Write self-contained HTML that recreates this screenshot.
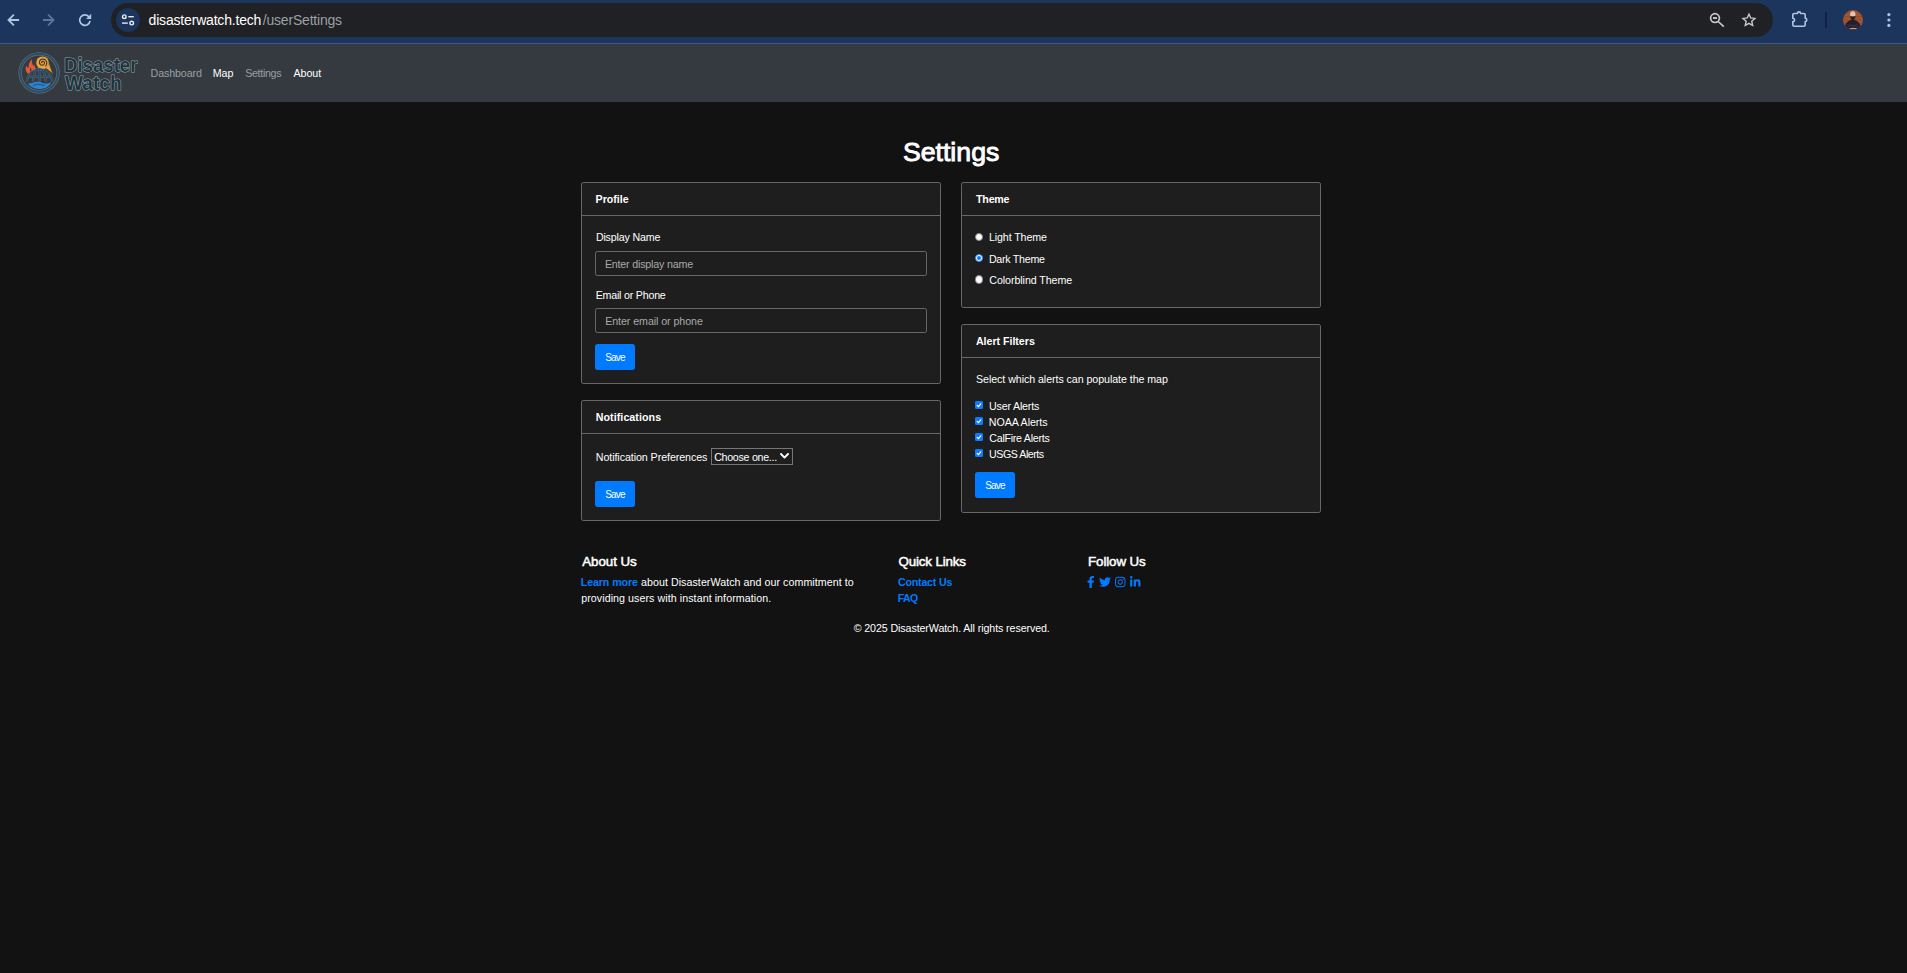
<!DOCTYPE html>
<html lang="en">
<head>
<meta charset="utf-8">
<title>DisasterWatch - Settings</title>
<style>
*{box-sizing:border-box;margin:0;padding:0}
html,body{width:1907px;height:973px;overflow:hidden;background:#121212}
body{position:relative;font-family:"Liberation Sans",sans-serif;font-size:10.667px;line-height:16px;color:#fff}
.x{position:absolute;white-space:nowrap;line-height:16px;font-weight:400;font-size:10.667px}
/* ---------- browser chrome ---------- */
#chrome{position:absolute;left:0;top:0;width:1907px;height:44px;background:#1b355c;border-bottom:1px solid #3d5884}
#chrome svg{position:absolute;overflow:visible}
#omni{position:absolute;left:111px;top:3px;width:1662px;height:34px;border-radius:17px;background:#202124}
#siteinfo{position:absolute;left:5px;top:5px;width:24px;height:24px;border-radius:12px;background:#1b355c}
#url{position:absolute;left:0;top:0;height:34px;color:#fff}
#u1,#u2{font-size:14px;line-height:20px}
#u2{color:#9aa0a6}
#sep{position:absolute;left:1825px;top:12px;width:2px;height:16px;background:#0f2244;border-radius:1px}
#avatar{position:absolute;left:1843px;top:10px;width:20px;height:20px;border-radius:50%;overflow:hidden;background:#7a4a3a}
/* ---------- navbar ---------- */
#nav{position:absolute;left:0;top:44px;width:1907px;height:58px;background:#343a40}
#nav a{text-decoration:none;color:#fff}
#nav a.dim{color:rgba(255,255,255,.5)}
#wm span{position:absolute;left:64.3px;font-size:20.1px;font-weight:700;line-height:24px;white-space:nowrap;color:#1c3640;transform-origin:0 0;transform:scaleX(.926);-webkit-text-stroke:1px rgba(165,178,185,.85);paint-order:stroke fill;text-shadow:0 0 .8px rgba(165,178,185,.7)}
#logo{position:absolute;overflow:visible}
/* ---------- main ---------- */
h1.x{font-size:26.667px;line-height:32px;-webkit-text-stroke:.9px #fff}
.card{position:absolute;width:360px;background:#1e1e1e;border:1px solid #676767;border-radius:2.2px}
.card .hd{position:relative;height:33px;border-bottom:1px solid #676767}
.card .hd .x{font-weight:700}
.card .bd{position:relative}
.inp{position:absolute;left:13.333px;width:332px;height:25.333px;border:1px solid #676767;border-radius:2.2px;background:#1e1e1e;color:#a9a9a9}
.btn{position:absolute;left:13.333px;width:40px;height:26px;border-radius:2.667px;background:#007bff;color:#fff}
.radio{position:absolute;left:13.16px;width:8.2px;height:8.2px;border-radius:50%;background:#fff;border:.8px solid #8a8a8a}
.radio.on{border:.9px solid #2f83ff;background:#fff}
.radio.on::after{content:"";position:absolute;left:1px;top:1px;right:1px;bottom:1px;border-radius:50%;background:#0b7bff}
.chk{position:absolute;left:13.1px;width:8px;height:8px;border-radius:1.3px;background:#0b7bff}
.chk svg{position:absolute;left:0;top:0;width:100%;height:100%}
.sel{position:absolute;left:129px;top:13.67px;width:82px;height:17px;border:1px solid #767676;background:#1e1e1e}
.sel svg{position:absolute;right:3.4px;top:4.1px;width:9px;height:6px}
/* ---------- footer ---------- */
h5.x{font-size:13.333px;-webkit-text-stroke:.5px #fff}
a.lk{color:#007bff;font-weight:700;text-decoration:none}
#social svg{position:absolute;overflow:visible}
#b1,#b2,#b3{font-size:10px}
#f7{font-size:10.5px}
/*FIT*/
#u1{left:37.60px;top:7.00px;letter-spacing:-0.185px}
#u2{left:151.80px;top:7.00px;letter-spacing:-0.201px}
#n1{left:150.55px;top:21.00px;letter-spacing:-0.104px}
#n2{left:212.85px;top:21.00px;letter-spacing:-0.100px}
#n3{left:245.20px;top:21.00px;letter-spacing:-0.306px}
#n4{left:293.50px;top:21.00px;letter-spacing:-0.046px}
#h1{left:902.90px;top:136.00px;letter-spacing:0.014px}
#c1h{left:13.60px;top:8.00px;letter-spacing:-0.033px}
#l1{left:13.90px;top:13.00px;letter-spacing:-0.172px}
#p1{left:8.55px;top:4.34px;letter-spacing:-0.174px}
#l2{left:13.70px;top:71.00px;letter-spacing:-0.213px}
#p2{left:8.85px;top:4.00px;letter-spacing:-0.064px}
#b1{left:9.90px;top:6.00px;letter-spacing:-0.795px}
#c2h{left:13.75px;top:7.70px;letter-spacing:0.067px}
#l3{left:13.75px;top:14.70px;letter-spacing:-0.063px}
#s1{left:2.15px;top:0.05px;letter-spacing:-0.275px}
#b2{left:9.90px;top:6.31px;letter-spacing:-0.795px}
#c3h{left:14.10px;top:8.00px;letter-spacing:-0.238px}
#r1{left:26.90px;top:13.00px;letter-spacing:-0.095px}
#r2{left:26.90px;top:35.00px;letter-spacing:-0.260px}
#r3{left:27.30px;top:56.00px;letter-spacing:-0.067px}
#c4h{left:13.90px;top:8.34px;letter-spacing:-0.024px}
#pp{left:14.00px;top:13.34px;letter-spacing:-0.061px}
#k1{left:27.10px;top:40.34px;letter-spacing:-0.190px}
#k2{left:26.85px;top:56.34px;letter-spacing:-0.050px}
#k3{left:27.35px;top:72.34px;letter-spacing:-0.275px}
#k4{left:27.10px;top:88.34px;letter-spacing:-0.480px}
#b3{left:9.90px;top:5.96px;letter-spacing:-0.795px}
#f1{left:582.25px;top:554.00px;letter-spacing:-0.055px}
#f2{left:580.75px;top:574.00px;letter-spacing:-0.098px}
#f3{left:641.00px;top:574.00px;letter-spacing:0.054px}
#f4{left:581.25px;top:590.00px;letter-spacing:0.067px}
#f5{left:898.40px;top:554.00px;letter-spacing:-0.130px}
#f6{left:897.90px;top:574.00px;letter-spacing:-0.191px}
#f7{left:897.65px;top:590.00px;letter-spacing:-0.500px}
#f8{left:1088.05px;top:554.00px;letter-spacing:-0.104px}
#f9{left:853.65px;top:620.00px;letter-spacing:-0.092px}
/*ENDFIT*/
</style>
</head>
<body>

<!-- ================= browser chrome ================= -->
<div id="chrome">
  <div id="omni">
    <div id="siteinfo"></div>
    <div id="url"><span class="x" id="u1">disasterwatch.tech</span><span class="x" id="u2">/userSettings</span></div>
  </div>
  <svg id="cicons" width="1907" height="44" viewBox="0 0 1907 44" style="left:0;top:0">
    <!-- back -->
    <path d="M19.1 20H8.2M13.9 14.6L8.5 20l5.4 5.4" fill="none" stroke="#b2c4e3" stroke-width="1.8"/>
    <!-- forward -->
    <path d="M43 20h10.7M48.1 14.6l5.4 5.4-5.4 5.4" fill="none" stroke="#5d749c" stroke-width="1.8"/>
    <!-- reload -->
    <path d="M89.2 17.2A5.2 5.2 0 1 0 90.050 20.900" fill="none" stroke="#b2c4e3" stroke-width="1.65"/>
    <path d="M91.2 13.8v5.2h-5.2z" fill="#b2c4e3"/>
    <!-- tune / site info -->
    <g fill="none" stroke="#e8eaed" stroke-width="1.4">
      <circle cx="124.3" cy="16.7" r="1.8"/><path d="M128.3 16.7h5.500"/>
      <path d="M122 23.1h5.800"/><circle cx="131.700" cy="23.100" r="1.800"/>
    </g>
    <!-- zoom out -->
    <g fill="none" stroke="#c7c9cc" stroke-width="1.7">
      <circle cx="1715" cy="18.1" r="4.4"/><path d="M1718.2 21.5l5.6 5.2"/>
    </g>
    <rect x="1713" y="17.1" width="4" height="1.9" fill="#c7c9cc"/>
    <!-- star -->
    <polygon points="1748.95,14.10 1750.68,17.96 1754.89,18.42 1751.76,21.26 1752.62,25.41 1748.95,23.30 1745.28,25.41 1746.14,21.26 1743.01,18.42 1747.22,17.96" fill="none" stroke="#c7c9cc" stroke-width="1.4" stroke-linejoin="miter"/>
    <!-- extension -->
    <path d="M1794.3 13.5H1797.4A1.6 1.6 0 0 1 1800.6 13.5H1803.7A1.5 1.5 0 0 1 1805.2 15V18.3A1.6 1.6 0 0 1 1805.2 21.5V24.7A1.5 1.5 0 0 1 1803.7 26.2H1794.3A1.5 1.5 0 0 1 1792.8 24.7V21.6A1.7 1.7 0 0 0 1792.8 18.2V15A1.5 1.5 0 0 1 1794.3 13.5Z" fill="none" stroke="#b2c4e3" stroke-width="1.6" stroke-linejoin="round"/>
    <!-- menu dots -->
    <g fill="#b2c4e3"><circle cx="1888.9" cy="14.6" r="1.6"/><circle cx="1888.9" cy="20" r="1.6"/><circle cx="1888.9" cy="25.4" r="1.6"/></g>
  </svg>
  <div id="sep"></div>
  <div id="avatar"><svg width="20" height="20" viewBox="1842.9 10 20 20" style="left:0;top:0">
      <defs><clipPath id="avc"><circle cx="1852.9" cy="20" r="10"/></clipPath></defs>
      <g clip-path="url(#avc)">
        <rect x="1842" y="9" width="22" height="22" fill="#9f5631"/>
        <path d="M1842 13h22M1842 16.5h22M1842 20h22M1842 23.500h22" stroke="#87452a" stroke-width=".5"/>
        <path d="M1844.2 31C1844.2 24.5 1846.6 20.6 1852.7 19.4C1858.800 20.6 1861.2 24.5 1861.2 31Z" fill="#241f2e"/>
        <path d="M1847 24.5L1859 27M1846.500 27L1858 24.500" stroke="#4a4052" stroke-width=".5"/>
        <ellipse cx="1852.7" cy="14.4" rx="2.7" ry="3.2" fill="#e3c3b2"/>
        <path d="M1850 15.6C1850.300 19.600 1851.600 20 1852.700 20C1853.800 20 1855.100 19.600 1855.400 15.600C1854.400 16.800 1851 16.800 1850 15.600Z" fill="#2a1e1b"/>
        <path d="M1849.400 28.300Q1853 27.300 1856.800 28.300L1856.500 29.500Q1853 28.600 1849.700 29.500Z" fill="#c99a82"/>
      </g>
    </svg></div>
</div>

<!-- ================= navbar ================= -->
<div id="nav">
  <div id="wm"><span style="top:8.7px">Disaster</span><span style="top:27.2px;left:64.500px;transform:scaleX(.95)">Watch</span></div>
  <svg id="logo" width="150" height="58" viewBox="0 44 150 58" style="left:0;top:0;width:150px;height:58px">
    <!-- ring -->
    <circle cx="39.1" cy="72.8" r="19" fill="none" stroke="#8c9aa3" stroke-opacity=".55" stroke-width="3.3"/>
    <circle cx="39.1" cy="72.8" r="19" fill="none" stroke="#274d68" stroke-width="2"/>
    <!-- flame -->
    <path d="M28.3 73.9C25.4 71.6 24.8 68.4 26.5 65.5C26.9 67 27.5 67.8 28.5 68.2C28.2 64.6 29.6 61.4 31.8 59C31.4 61.8 32.4 63.8 33.3 65.9C33.6 65.5 33.9 65.2 34.1 64.8C35.4 66.8 35.8 68.8 35.2 70.6C33 71 30.4 72.2 28.3 73.9Z" fill="#e05a34"/>
    <path d="M30.6 67.4C31.7 69 31.7 70.6 30.9 72C29.7 71.4 29.5 69.2 30.6 67.4Z" fill="#343a40"/>
    <!-- swirl -->
    <path d="M48.9 62.5C49.6 66 50.8 69.5 52.9 73.9C50.6 71.4 48.6 69.700 45.8 68.300L48.2 65.500Z" fill="#f0a236"/>
    <circle cx="42.5" cy="62.7" r="6.300" fill="#f0a236"/>
    <path d="M41.71 62.56L41.69 62.45L41.69 62.33L41.70 62.21L41.73 62.08L41.78 61.96L41.85 61.84L41.94 61.72L42.05 61.62L42.18 61.53L42.32 61.45L42.48 61.39L42.65 61.35L42.83 61.34L43.01 61.35L43.20 61.38L43.39 61.44L43.57 61.53L43.74 61.64L43.90 61.78L44.05 61.94L44.18 62.13L44.28 62.33L44.36 62.56L44.41 62.79L44.43 63.04L44.41 63.29L44.37 63.55L44.28 63.80L44.17 64.04L44.02 64.27L43.84 64.49L43.63 64.68L43.39 64.85L43.12 64.99L42.84 65.10L42.53 65.16L42.22 65.20L41.90 65.19L41.58 65.13L41.26 65.04L40.95 64.90L40.65 64.73L40.38 64.51L40.13 64.25L39.91 63.96L39.73 63.64L39.59 63.30L39.49 62.93L39.44 62.55L39.43 62.16L39.48 61.77L39.58 61.38L39.73 61.00L39.93 60.63L40.18 60.29L40.47 59.99L40.80 59.71L41.17 59.48L41.57 59.29L42.00 59.16L42.45 59.08L42.91 59.06L43.37 59.09L43.84 59.19L44.29 59.34L44.72 59.55L45.13 59.82L45.50 60.14L45.84 60.51L46.13 60.93L46.37 61.38L46.55 61.87L46.66 62.38L46.72 62.91L46.70 63.44L46.62 63.98L46.47 64.50L46.25 65.01L45.97 65.49L45.63 65.94" fill="none" stroke="#3d3a3a" stroke-width="1.150" stroke-linecap="round"/>
    <!-- globe -->
    <g fill="none" stroke="#8c9aa3" stroke-opacity=".4" stroke-width="2.3">
      <path d="M27 81.6A12.5 12.5 0 0 1 52 81.6"/><path d="M39.5 68.9V81.6"/><path d="M33.2 81.6A6.3 12.5 0 0 1 45.8 81.6"/><path d="M27.9 76.8H51.1"/>
    </g>
    <g fill="none" stroke="#274d68" stroke-width="1.25">
      <path d="M27 81.6A12.5 12.5 0 0 1 52 81.6"/>
      <path d="M39.5 68.9V81.6"/>
      <path d="M33.2 81.6A6.3 12.5 0 0 1 45.8 81.6"/>
      <path d="M27.9 76.8H51.1"/>
      <path d="M30.6 72.6Q39.5 70.6 48.4 72.6"/>
    </g>
    <!-- water -->
    <path d="M28 83.6C31 83.6 34.5 81.6 38 81.7C41.5 81.8 42.5 83.6 45.5 83.6C48 83.6 49.5 82.6 51.2 82.2C49.6 86.2 45 89 39.2 89C34 89 29.6 86.6 28 83.6Z" fill="#2a84d6"/>
    <path d="M32.8 86C35.5 84.3 38 84 40 84.5C42 85 43 85.6 44.8 85.3" fill="none" stroke="#343a40" stroke-width=".8"/>
  </svg>
  <a class="dim x" id="n1" href="#">Dashboard</a>
  <a class="x" id="n2" href="#">Map</a>
  <a class="dim x" id="n3" href="#">Settings</a>
  <a class="x" id="n4" href="#">About</a>
</div>

<!-- ================= main ================= -->
<h1 class="x" id="h1">Settings</h1>

<div class="card" style="left:581px;top:182px;height:201.5px">
  <div class="hd"><span class="x" id="c1h">Profile</span></div>
  <div class="bd">
    <label class="x" id="l1">Display Name</label>
    <div class="inp" style="top:34.667px"><span class="x" id="p1">Enter display name</span></div>
    <label class="x" id="l2">Email or Phone</label>
    <div class="inp" style="top:92px"><span class="x" id="p2">Enter email or phone</span></div>
    <div class="btn" style="top:128px"><span class="x" id="b1">Save</span></div>
  </div>
</div>

<div class="card" style="left:581px;top:400.3px;height:120.3px">
  <div class="hd"><span class="x" id="c2h">Notifications</span></div>
  <div class="bd">
    <label class="x" id="l3">Notification Preferences</label>
    <div class="sel"><span class="x" id="s1">Choose one...</span><svg viewBox="0 0 9 6"><path d="M1 1 L4.5 4.6 L8 1" fill="none" stroke="#fff" stroke-width="1.9" stroke-linecap="round" stroke-linejoin="round"/></svg></div>
    <div class="btn" style="top:46.4px"><span class="x" id="b2">Save</span></div>
  </div>
</div>

<div class="card" style="left:961px;top:182px;height:125.7px">
  <div class="hd"><span class="x" id="c3h">Theme</span></div>
  <div class="bd">
    <div class="radio" style="top:16.85px"></div><label class="x" id="r1">Light Theme</label>
    <div class="radio on" style="top:37.8px"></div><label class="x" id="r2">Dark Theme</label>
    <div class="radio" style="top:59.4px"></div><label class="x" id="r3">Colorblind Theme</label>
  </div>
</div>

<div class="card" style="left:961px;top:323.67px;height:189px">
  <div class="hd"><span class="x" id="c4h">Alert Filters</span></div>
  <div class="bd">
    <p class="x" id="pp">Select which alerts can populate the map</p>
    <div class="chk" style="top:43.4px"><svg viewBox="0 0 9 9"><path d="M2 4.6 L3.8 6.4 L7 2.6" fill="none" stroke="#fff" stroke-width="1.25"/></svg></div><label class="x" id="k1">User Alerts</label>
    <div class="chk" style="top:59.4px"><svg viewBox="0 0 9 9"><path d="M2 4.6 L3.8 6.4 L7 2.6" fill="none" stroke="#fff" stroke-width="1.25"/></svg></div><label class="x" id="k2">NOAA Alerts</label>
    <div class="chk" style="top:75.4px"><svg viewBox="0 0 9 9"><path d="M2 4.6 L3.8 6.4 L7 2.6" fill="none" stroke="#fff" stroke-width="1.25"/></svg></div><label class="x" id="k3">CalFire Alerts</label>
    <div class="chk" style="top:91.4px"><svg viewBox="0 0 9 9"><path d="M2 4.6 L3.8 6.4 L7 2.6" fill="none" stroke="#fff" stroke-width="1.25"/></svg></div><label class="x" id="k4">USGS Alerts</label>
    <div class="btn" style="top:114.4px"><span class="x" id="b3">Save</span></div>
  </div>
</div>

<!-- ================= footer ================= -->
<h5 class="x" id="f1">About Us</h5>
<p><a class="x lk" id="f2" href="#">Learn more</a> <span class="x" id="f3">about DisasterWatch and our commitment to</span> <span class="x" id="f4">providing users with instant information.</span></p>

<h5 class="x" id="f5">Quick Links</h5>
<a class="x lk" id="f6" href="#">Contact Us</a>
<a class="x lk" id="f7" href="#">FAQ</a>

<h5 class="x" id="f8">Follow Us</h5>
<div id="social">
  <svg style="left:1087.3px;top:576px" width="7.5" height="12" viewBox="0 0 320 512"><path fill="#007bff" d="M279.14 288l14.22-92.66h-88.91v-60.13c0-25.35 12.42-50.06 52.24-50.06h40.42V6.26S260.43 0 225.36 0c-73.22 0-121.08 44.38-121.08 124.72v70.62H22.89V288h81.39v224h100.17V288z"/></svg>
  <svg style="left:1098.9px;top:576px" width="12" height="12" viewBox="0 0 512 512"><path fill="#007bff" d="M459.37 151.716c.325 4.548.325 9.097.325 13.645 0 138.72-105.583 298.558-298.558 298.558-59.452 0-114.68-17.219-161.137-47.106 8.447.974 16.568 1.299 25.34 1.299 49.055 0 94.213-16.568 130.274-44.832-46.132-.975-84.792-31.188-98.112-72.772 6.498.974 12.995 1.624 19.818 1.624 9.421 0 18.843-1.3 27.614-3.573-48.081-9.747-84.143-51.98-84.143-102.985v-1.299c13.969 7.797 30.214 12.67 47.431 13.319-28.264-18.843-46.781-51.005-46.781-87.391 0-19.492 5.197-37.36 14.294-52.954 51.655 63.675 129.3 105.258 216.365 109.807-1.624-7.797-2.599-15.918-2.599-24.04 0-57.828 46.782-104.934 104.934-104.934 30.213 0 57.502 12.67 76.67 33.137 23.715-4.548 46.456-13.32 66.599-25.34-7.798 24.366-24.366 44.833-46.132 57.827 21.117-2.273 41.584-8.122 60.426-16.243-14.292 20.791-32.161 39.308-52.628 54.253z"/></svg>
  <svg style="left:1115.1px;top:576px" width="10.5" height="12" viewBox="0 0 448 512"><path fill="#007bff" d="M224.1 141c-63.6 0-114.9 51.3-114.9 114.9s51.3 114.9 114.9 114.9S339 319.500 339 255.900 287.700 141 224.100 141zm0 189.600c-41.100 0-74.700-33.500-74.700-74.700s33.500-74.700 74.700-74.700 74.700 33.500 74.700 74.700-33.600 74.700-74.700 74.700zm146.400-194.300c0 14.900-12 26.800-26.800 26.800-14.900 0-26.800-12-26.800-26.800s12-26.800 26.800-26.800 26.800 12 26.800 26.800zm76.100 27.200c-1.700-35.900-9.900-67.700-36.200-93.900-26.200-26.200-58-34.400-93.900-36.200-37-2.100-147.900-2.100-184.900 0-35.800 1.700-67.600 9.900-93.900 36.100s-34.400 58-36.200 93.900c-2.100 37-2.100 147.900 0 184.900 1.700 35.900 9.900 67.700 36.200 93.900s58 34.400 93.900 36.200c37 2.100 147.900 2.100 184.900 0 35.900-1.700 67.700-9.900 93.900-36.200 26.200-26.200 34.400-58 36.200-93.900 2.100-37 2.100-147.800 0-184.800zM398.800 388c-7.800 19.600-22.900 34.700-42.600 42.600-29.500 11.700-99.500 9-132.100 9s-102.700 2.600-132.100-9c-19.600-7.800-34.700-22.900-42.600-42.600-11.700-29.500-9-99.500-9-132.100s-2.600-102.700 9-132.100c7.800-19.600 22.900-34.700 42.600-42.600 29.500-11.700 99.500-9 132.100-9s102.700-2.600 132.100 9c19.600 7.800 34.700 22.900 42.600 42.600 11.700 29.500 9 99.500 9 132.100s2.700 102.700-9 132.100z"/></svg>
  <svg style="left:1129.7px;top:576px" width="10.5" height="12" viewBox="0 0 448 512"><path fill="#007bff" d="M100.28 448H7.4V148.9h92.88zM53.79 108.1C24.09 108.1 0 83.5 0 53.8a53.79 53.790 0 0 1 107.58 0c0 29.700-24.100 54.300-53.790 54.300zM447.900 448h-92.680V302.400c0-34.700-.7-79.200-48.290-79.200-48.290 0-55.690 37.700-55.690 76.700V448h-92.780V148.900h89.080v40.800h1.300c12.400-23.500 42.690-48.300 87.880-48.300 94 0 111.280 61.900 111.280 142.300V448z"/></svg>
</div>

<p class="x" id="f9">© 2025 DisasterWatch. All rights reserved.</p>

</body>
</html>
